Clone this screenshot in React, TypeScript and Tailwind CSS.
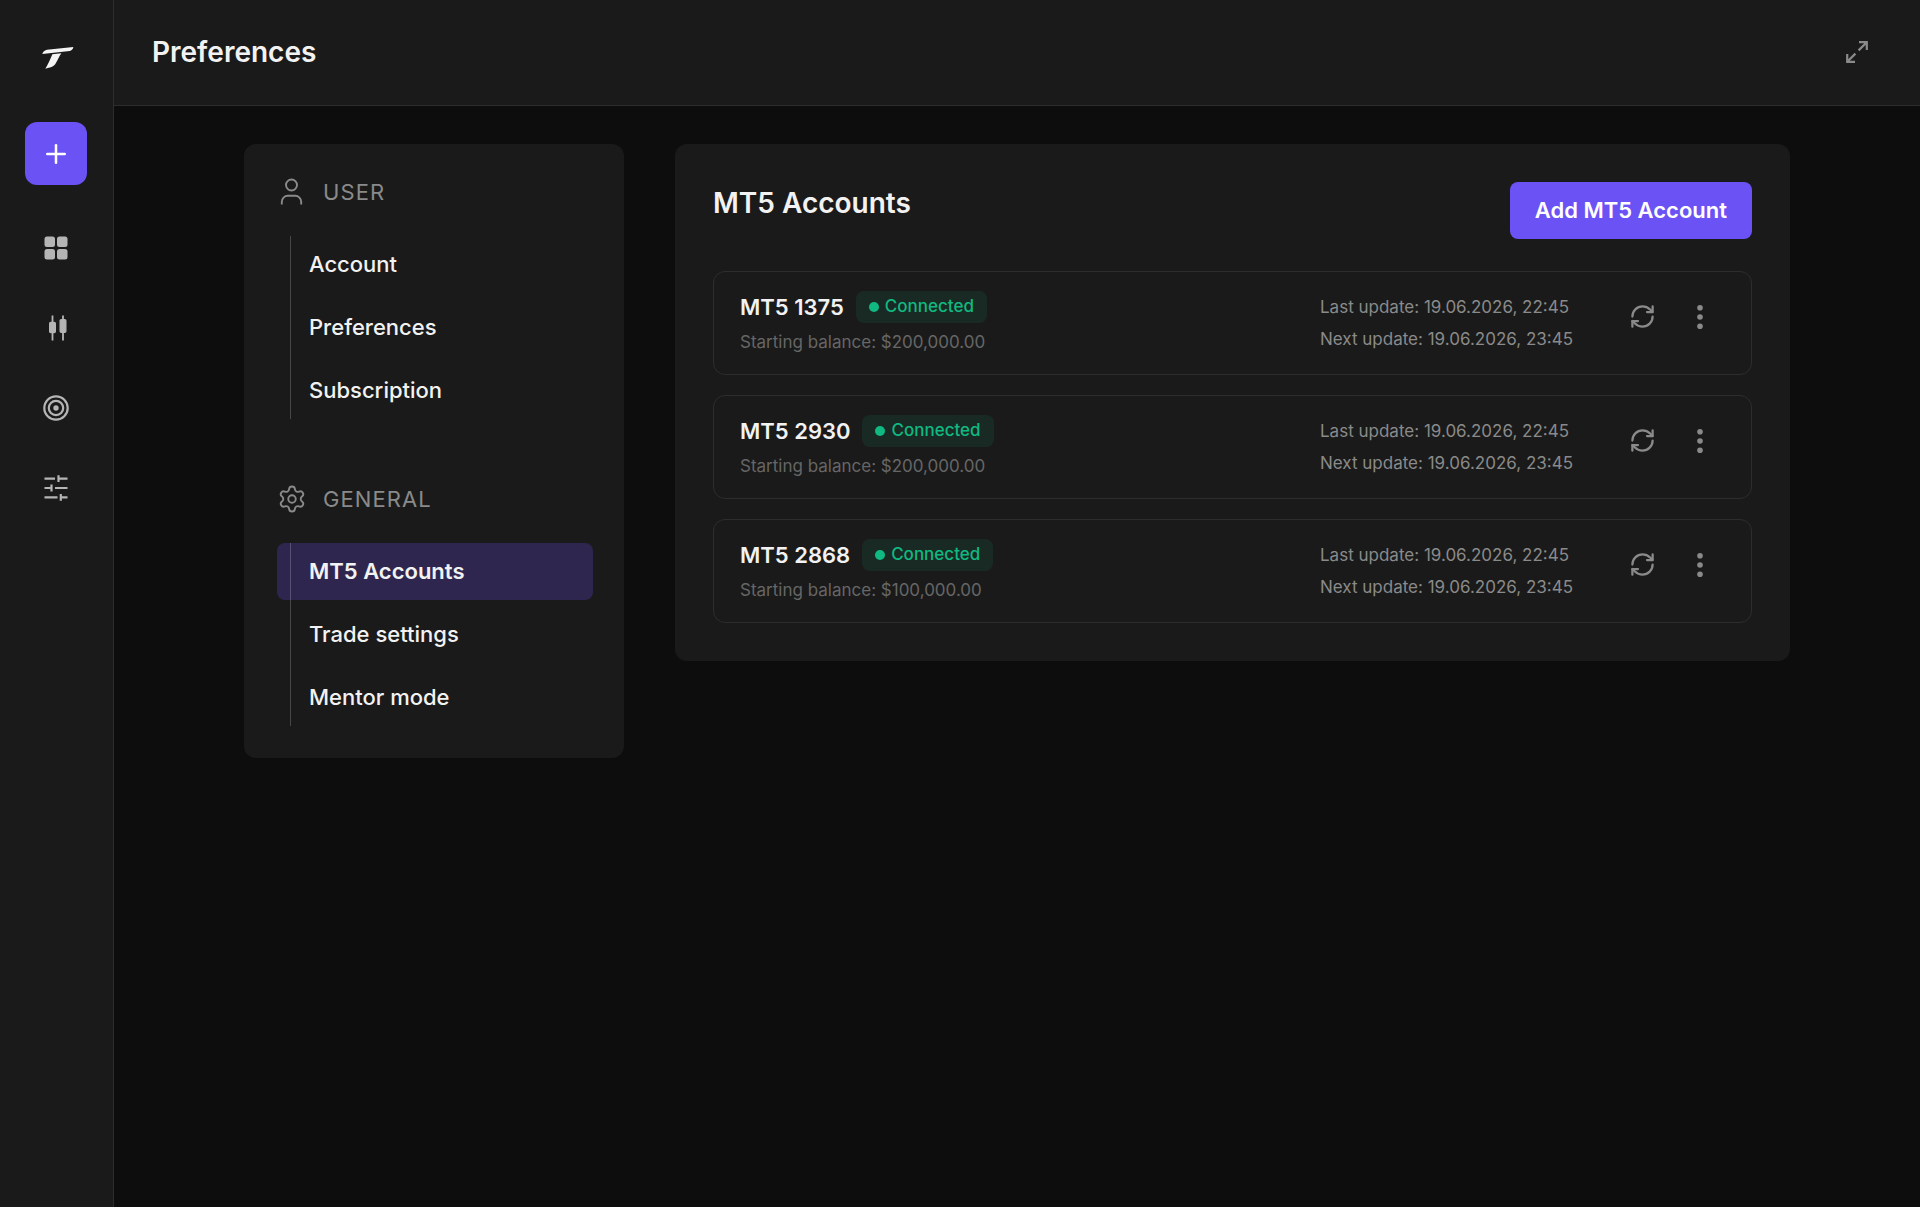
import type { ReactNode } from "react";
import { Plus, RefreshCw, Settings } from "lucide-react";

type Account = {
  name: string;
  balance: string;
  lastUpdate: string;
  nextUpdate: string;
};

const accounts: Account[] = [
  { name: "MT5 1375", balance: "$200,000.00", lastUpdate: "19.06.2026, 22:45", nextUpdate: "19.06.2026, 23:45" },
  { name: "MT5 2930", balance: "$200,000.00", lastUpdate: "19.06.2026, 22:45", nextUpdate: "19.06.2026, 23:45" },
  { name: "MT5 2868", balance: "$100,000.00", lastUpdate: "19.06.2026, 22:45", nextUpdate: "19.06.2026, 23:45" },
];

function Logo() {
  return (
    <svg width="32" height="22" viewBox="0 0 96 66" fill="#f5f5f5" aria-hidden="true">
      <path d="M1 21C2 16 6 10 15 8.500L94 0C93 6 89 11 83 12Z" />
      <path d="M31 22L58 19C51 29 47 40 40 51C34 60 24 61 10 65C19 52 23 40 31 22Z" />
    </svg>
  );
}

function GridIcon() {
  return (
    <svg width="24" height="24" viewBox="0 0 24 24" fill="currentColor" aria-hidden="true">
      <rect x="0.500" y="0.500" width="10.500" height="10.500" rx="2.500" />
      <rect x="13" y="0.500" width="10.500" height="10.500" rx="2.500" />
      <rect x="0.500" y="13" width="10.500" height="10.500" rx="2.500" />
      <rect x="13" y="13" width="10.500" height="10.500" rx="2.500" />
    </svg>
  );
}

function CandlesIcon() {
  return (
    <svg width="24" height="26" viewBox="0 0 24 26" fill="currentColor" stroke="currentColor" aria-hidden="true">
      <path d="M8.500 0.500v25M19 0.500v25" strokeWidth="1.800" />
      <rect x="5.700" y="7.500" width="5.600" height="10" rx="1" strokeWidth="1.400" />
      <rect x="16.200" y="4.700" width="5.600" height="12.600" rx="1" strokeWidth="1.400" />
    </svg>
  );
}

function TargetIcon() {
  return (
    <svg width="26" height="26" viewBox="0 0 26 26" fill="none" stroke="currentColor" strokeWidth="2.200" aria-hidden="true">
      <circle cx="13" cy="13" r="11.700" />
      <circle cx="13" cy="13" r="7.200" />
      <circle cx="13" cy="13" r="2.700" fill="currentColor" stroke="none" />
    </svg>
  );
}

function SlidersIcon() {
  return (
    <svg width="24" height="26" viewBox="0 0 24 26" fill="none" stroke="currentColor" strokeWidth="2.200" aria-hidden="true">
      <path d="M0.500 3.700h10.500M14.500 3.700h9M14.500 0.300v6.800" />
      <path d="M0.500 13h7M11 13h12.500M7.500 9.600v6.800" />
      <path d="M0.500 22.300h13M16.800 22.300h6.700M16.800 18.900v6.800" />
    </svg>
  );
}

function ExpandIcon() {
  return (
    <svg width="22" height="22" viewBox="0 0 22 22" fill="none" stroke="currentColor" strokeWidth="2.200" aria-hidden="true">
      <path d="M13 1.200h7.800V9M20.500 1.500L12.600 9.400" />
      <path d="M9 20.800H1.200V13M1.500 20.500L9.400 12.600" />
    </svg>
  );
}

function UserIcon() {
  return (
    <svg width="30" height="30" viewBox="0 0 30 30" fill="none" stroke="currentColor" strokeWidth="1.900" aria-hidden="true">
      <circle cx="14.500" cy="8" r="5.500" />
      <path d="M4.800 27.500v-2.700a6 6 0 0 1 6-6h7.400a6 6 0 0 1 6 6v2.700" />
    </svg>
  );
}

function DotsIcon() {
  return (
    <svg width="24" height="26" viewBox="0 0 24 26" fill="currentColor" aria-hidden="true">
      <circle cx="12" cy="3.800" r="2.800" />
      <circle cx="12" cy="13" r="2.800" />
      <circle cx="12" cy="22.200" r="2.800" />
    </svg>
  );
}

function Sidebar() {
  const links = [
    { label: "Dashboard", icon: <GridIcon /> },
    { label: "Trades", icon: <CandlesIcon /> },
    { label: "Goals", icon: <TargetIcon /> },
    { label: "Settings", icon: <SlidersIcon /> },
  ];

  return (
    <aside className="flex w-[114px] shrink-0 flex-col items-center border-r border-[#2d2d2d] bg-[#1a1a1a] pr-px">
      <a href="#" aria-label="Home" className="mt-[47px] pl-1">
        <Logo />
      </a>
      <button
        aria-label="Add"
        className="mt-[53px] flex h-[63px] w-[62px] items-center justify-center rounded-xl bg-[#6b52f4] text-white"
      >
        <Plus size={30} strokeWidth={2} />
      </button>
      <nav className="mt-[31px] flex flex-col gap-4 text-[#b5b5b5]">
        {links.map((link) => (
          <a key={link.label} href="#" aria-label={link.label} className="flex size-16 items-center justify-center">
            {link.icon}
          </a>
        ))}
      </nav>
    </aside>
  );
}

function MenuGroup({ title, icon, items, active }: { title: string; icon: ReactNode; items: string[]; active?: string }) {
  return (
    <section>
      <h3 className="flex h-8 items-center gap-4 text-[22px] tracking-wider text-[#8a8a8a]">
        {icon}
        {title}
      </h3>
      <ul className="relative mt-7 flex flex-col gap-1.5">
        {items.map((item) => (
          <li key={item}>
            <a
              href="#"
              className={`flex h-[57px] items-center rounded-lg pl-8 text-[22px] text-[#f2f2f2] ${
                item === active ? "bg-[#2e264f] font-semibold" : "font-medium"
              }`}
            >
              {item}
            </a>
          </li>
        ))}
        <li aria-hidden="true" className="absolute inset-y-0 left-[13px] w-px bg-white/20" />
      </ul>
    </section>
  );
}

function AccountCard({ account }: { account: Account }) {
  return (
    <li className="flex items-start rounded-xl border border-[#2d2d2d] px-[26px] py-[19px]">
      <div className="flex-1">
        <div className="flex h-8 items-center gap-3">
          <h3 className="text-[22px] font-semibold text-[#f2f2f2]">{account.name}</h3>
          <span className="flex h-8 items-center gap-1.5 rounded-lg bg-[#10b981]/10 px-[13px] text-[17px] font-medium text-[#10b981]">
            <span className="size-2.5 rounded-full bg-[#10b981]" />
            Connected
          </span>
        </div>
        <p className="mt-1.5 text-[17px] leading-[26px] text-[#666666]">Starting balance: {account.balance}</p>
      </div>
      <div className="min-w-[259px] text-[17px] leading-8 text-[#8a8a8a]">
        <p>Last update: {account.lastUpdate}</p>
        <p>Next update: {account.nextUpdate}</p>
      </div>
      <div className="ml-[38px] flex gap-1.5 text-[#8a8a8a]">
        <button aria-label={`Refresh ${account.name}`} className="flex size-[51px] items-center justify-center">
          <RefreshCw size={27} strokeWidth={2} />
        </button>
        <button aria-label={`More options for ${account.name}`} className="flex size-[51px] items-center justify-center">
          <DotsIcon />
        </button>
      </div>
    </li>
  );
}

export default function App() {
  return (
    <div className="flex min-h-screen bg-[#0d0d0d] font-['Inter',sans-serif] antialiased">
      <Sidebar />
      <div className="flex min-w-0 flex-1 flex-col">
        <header className="flex h-[106px] items-center justify-between border-b border-[#2d2d2d] bg-[#1a1a1a] px-[38px] pb-0.5">
          <h1 className="text-[28px] font-semibold text-[#f2f2f2]">Preferences</h1>
          <button aria-label="Full screen" className="flex size-[51px] items-center justify-center text-[#8a8a8a]">
            <ExpandIcon />
          </button>
        </header>
        <main className="mx-auto flex w-full max-w-[1546px] items-start gap-[51px] pt-[38px]">
          <aside className="flex w-[380px] shrink-0 flex-col gap-16 rounded-xl bg-[#1a1a1a] pt-8 pr-[31px] pb-8 pl-[33px]">
            <MenuGroup title="USER" icon={<UserIcon />} items={["Account", "Preferences", "Subscription"]} />
            <MenuGroup
              title="GENERAL"
              icon={<Settings size={30} strokeWidth={1.5} />}
              items={["MT5 Accounts", "Trade settings", "Mentor mode"]}
              active="MT5 Accounts"
            />
          </aside>
          <section className="min-w-0 flex-1 rounded-xl bg-[#1a1a1a] p-[38px]">
            <div className="flex items-start justify-between">
              <h2 className="text-[28px] font-semibold text-[#f2f2f2]">MT5 Accounts</h2>
              <button className="h-[57px] rounded-lg bg-[#6b52f4] px-[25px] text-[22px] font-semibold text-white">
                Add MT5 Account
              </button>
            </div>
            <ul className="mt-8 flex flex-col gap-5">
              {accounts.map((account) => (
                <AccountCard key={account.name} account={account} />
              ))}
            </ul>
          </section>
        </main>
      </div>
    </div>
  );
}
